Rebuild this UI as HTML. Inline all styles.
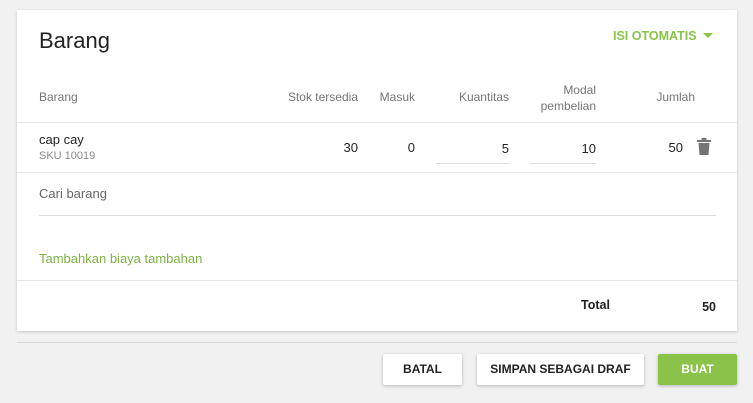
<!DOCTYPE html>
<html><head><style>
*{margin:0;padding:0;box-sizing:border-box}
body{width:753px;height:403px;background:#f1f1f1;font-family:"Liberation Sans",sans-serif;position:relative;overflow:hidden;color:#222}
.card{position:absolute;left:17px;top:10px;width:720px;height:321px;background:#fff;box-shadow:0 1px 3px rgba(0,0,0,.18)}
.a{position:absolute;white-space:nowrap}
.h{font-size:12px;color:#757575}
.r{text-align:right}
.line{position:absolute;height:1px;background:#e6e6e6}
.btn{position:absolute;top:354px;height:31px;background:#fff;box-shadow:0 1px 3px rgba(0,0,0,.25);border-radius:2px;font-size:12px;font-weight:bold;text-align:center;line-height:31px;color:#222}
</style></head><body>
<div class="card">
<div class="a" style="left:22px;top:18px;font-size:22px;color:#222">Barang</div>
<div class="a" style="left:596px;top:19px;font-size:12.5px;font-weight:bold;color:#8bc34a">ISI OTOMATIS</div>
<div class="a" style="left:686px;top:23px;width:0;height:0;border-left:5px solid transparent;border-right:5px solid transparent;border-top:5px solid #8bc34a"></div>
<div class="a h" style="left:22px;top:80px">Barang</div>
<div class="a h r" style="right:379px;top:80px">Stok tersedia</div>
<div class="a h r" style="right:322px;top:80px">Masuk</div>
<div class="a h r" style="right:228px;top:80px">Kuantitas</div>
<div class="a h r" style="right:141px;top:72px;line-height:16px">Modal<br>pembelian</div>
<div class="a h r" style="right:42px;top:80px">Jumlah</div>
<div class="line" style="left:0;right:0;top:112px"></div>
<div class="a" style="left:22px;top:122px;font-size:13px">cap cay</div>
<div class="a" style="left:22px;top:140px;font-size:11px;color:#888">SKU 10019</div>
<div class="a r" style="right:379px;top:130px;font-size:13px">30</div>
<div class="a r" style="right:322px;top:130px;font-size:13px">0</div>
<div class="a r" style="right:228px;top:131px;font-size:13px">5</div>
<div class="line" style="left:419px;width:73px;top:153px;background:#ddd"></div>
<div class="a r" style="right:141px;top:131px;font-size:13px">10</div>
<div class="line" style="left:513px;width:66px;top:153px;background:#ddd"></div>
<div class="a r" style="right:54px;top:130px;font-size:13px">50</div>
<svg class="a" style="left:680px;top:128px" width="14" height="17" viewBox="0 0 14 17"><rect x="0" y="2" width="14" height="2" fill="#757575"/><rect x="4.5" y="0" width="5" height="3" fill="#757575"/><path d="M1.5 5h11l-1 12h-9z" fill="#757575"/></svg>
<div class="line" style="left:0;right:0;top:162px"></div>
<div class="a" style="left:22px;top:176px;font-size:13px;color:#666">Cari barang</div>
<div class="line" style="left:22px;width:677px;top:205px;background:#ddd"></div>
<div class="a" style="left:22px;top:241px;font-size:13px;color:#7cb342">Tambahkan biaya tambahan</div>
<div class="line" style="left:0;right:0;top:270px"></div>
<div class="a" style="left:564px;top:288px;font-size:12.5px;font-weight:bold">Total</div>
<div class="a r" style="right:21px;top:290px;font-size:12.5px;font-weight:bold">50</div>
</div>
<div class="line" style="left:17px;width:720px;top:342px;background:#d8d8d8"></div>
<div class="btn" style="left:383px;width:79px">BATAL</div>
<div class="btn" style="left:477px;width:167px">SIMPAN SEBAGAI DRAF</div>
<div class="btn" style="left:658px;width:79px;background:#8bc34a;color:#fff">BUAT</div>
</body></html>
